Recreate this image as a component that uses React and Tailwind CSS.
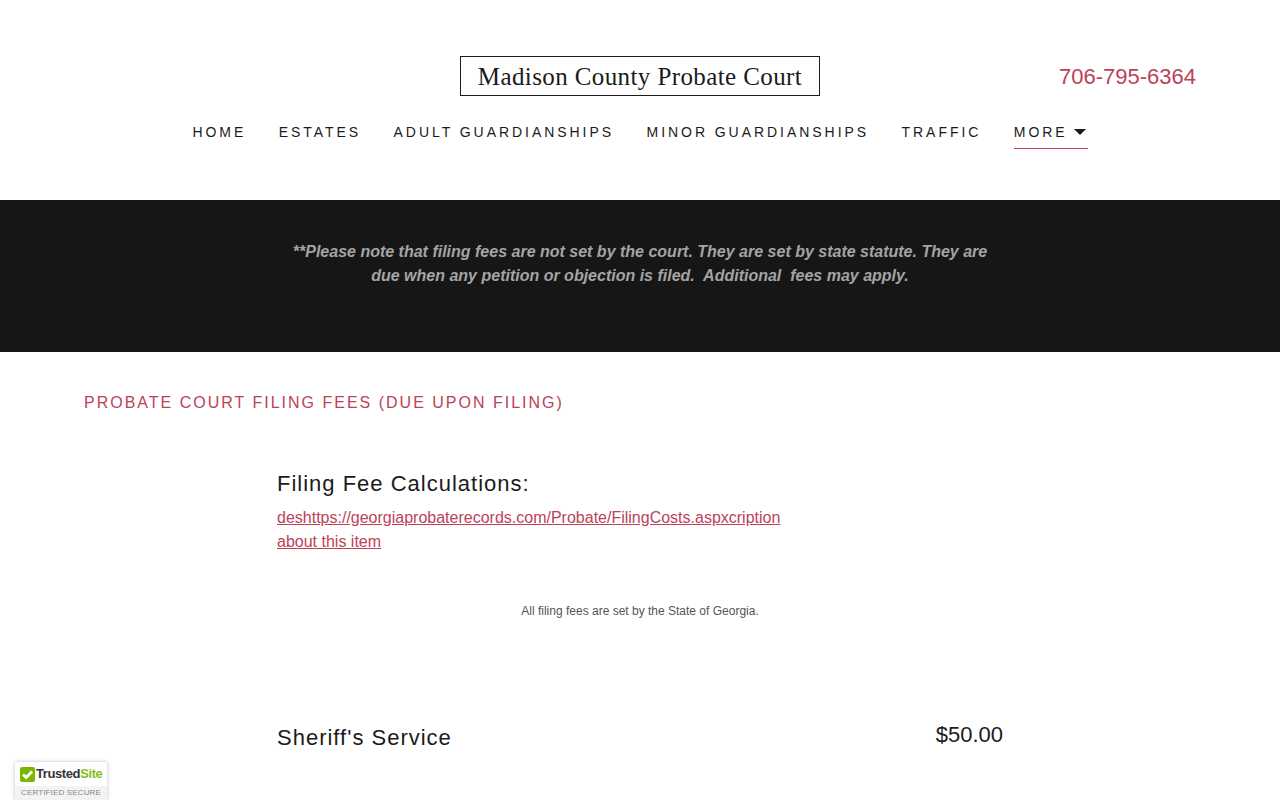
import React from 'react';

const sans = 'font-["Liberation_Sans",Arial,sans-serif]';

const navItems = ['Home', 'Estates', 'Adult Guardianships', 'Minor Guardianships', 'Traffic'];

const App = () => {
    return (
        <div className={`h-[800px] overflow-hidden relative bg-white text-[#1b1b1b] ${sans}`}>

            {/* HEADER */}
            <header className="h-[200px] pt-[56px]">
                <div className="relative flex justify-center">
                    <div className="w-[360px] h-[40px] pt-[1px] border border-[#1b1b1b] flex items-center justify-center font-['Liberation_Serif',serif] text-[25px] tracking-[0.4px] whitespace-nowrap">
                        Madison County Probate Court
                    </div>
                    <a className="absolute left-[1059px] top-[7px] text-[22px] leading-[28px] text-[#bc4258]">706-795-6364</a>
                </div>
                <nav className="mt-[24px] flex justify-center gap-[32.5px] text-[14px] tracking-[2.95px] uppercase leading-[24px]">
                    {navItems.map((item) => (
                        <a key={item} className="whitespace-nowrap">{item}</a>
                    ))}
                    <a className="flex items-center self-start h-[29px] pb-[4px] pr-[2px] border-b border-[#bc4258] whitespace-nowrap">
                        More
                        <svg width="12" height="6" viewBox="0 0 12 6" className="ml-[6px]">
                            <path d="M0 0h12L6 6z" fill="#1b1b1b" />
                        </svg>
                    </a>
                </nav>
            </header>

            {/* NOTICE */}
            <section className="h-[152px] bg-[#161616] pt-[40px] text-center text-[16px] leading-[24px] font-bold italic text-[#a4a4a4]">
                <p className="whitespace-pre">**Please note that filing fees are not set by the court. They are set by state statute. They are</p>
                <p className="whitespace-pre">due when any petition or objection is filed.  Additional  fees may apply.</p>
            </section>

            {/* FEES */}
            <main>
                <h2 className="pl-[84px] pt-[41px] text-[16px] leading-[20px] tracking-[2px] uppercase text-[#bc4258]">
                    Probate Court Filing Fees (due upon filing)
                </h2>

                <div className="pl-[277px] pr-[277px]">
                    <h4 className="mt-[56px] text-[22px] leading-[30px] tracking-[1px]">Filing Fee Calculations:</h4>
                    <a className="block mt-[7px] w-[520px] text-[16px] leading-[24px] underline text-[#bc4258]">
                        deshttps://georgiaprobaterecords.com/Probate/FilingCosts.aspxcription about this item
                    </a>
                    <p className="mt-[48px] text-center text-[12px] leading-[18px] text-[#555555]">
                        All filing fees are set by the State of Georgia.
                    </p>
                    <div className="mt-[100px] flex justify-between">
                        <span className="mt-[3px] text-[22px] leading-[30px] tracking-[1px]">Sheriff's Service</span>
                        <span className="text-[22px] leading-[30px]">$50.00</span>
                    </div>
                </div>
            </main>

            {/* TRUSTEDSITE BADGE */}
            <div className="absolute left-[15px] top-[762px] w-[92px] h-[38px] bg-white shadow-[0_0_4px_rgba(0,0,0,0.25)]">
                <div className="h-[24px] flex items-center pl-[5px]">
                    <svg width="15" height="15" viewBox="0 0 15 15">
                        <rect width="15" height="15" rx="2" fill="#7ab800" />
                        <path d="M3 7.5l3.2 3 5.8-6" fill="none" stroke="#fff" strokeWidth="2.8" />
                    </svg>
                    <span className="ml-[1px] text-[13px] font-bold tracking-[-0.4px] text-[#333333] whitespace-nowrap">
                        Trusted<span className="text-[#86bd1f]">Site</span>
                    </span>
                </div>
                <div className="h-[14px] bg-[#f3f3f3] text-center text-[8px] leading-[14px] tracking-[0.15px] text-[#888888] whitespace-nowrap">
                    CERTIFIED SECURE
                </div>
            </div>
        </div>
    );
};

export default App;
